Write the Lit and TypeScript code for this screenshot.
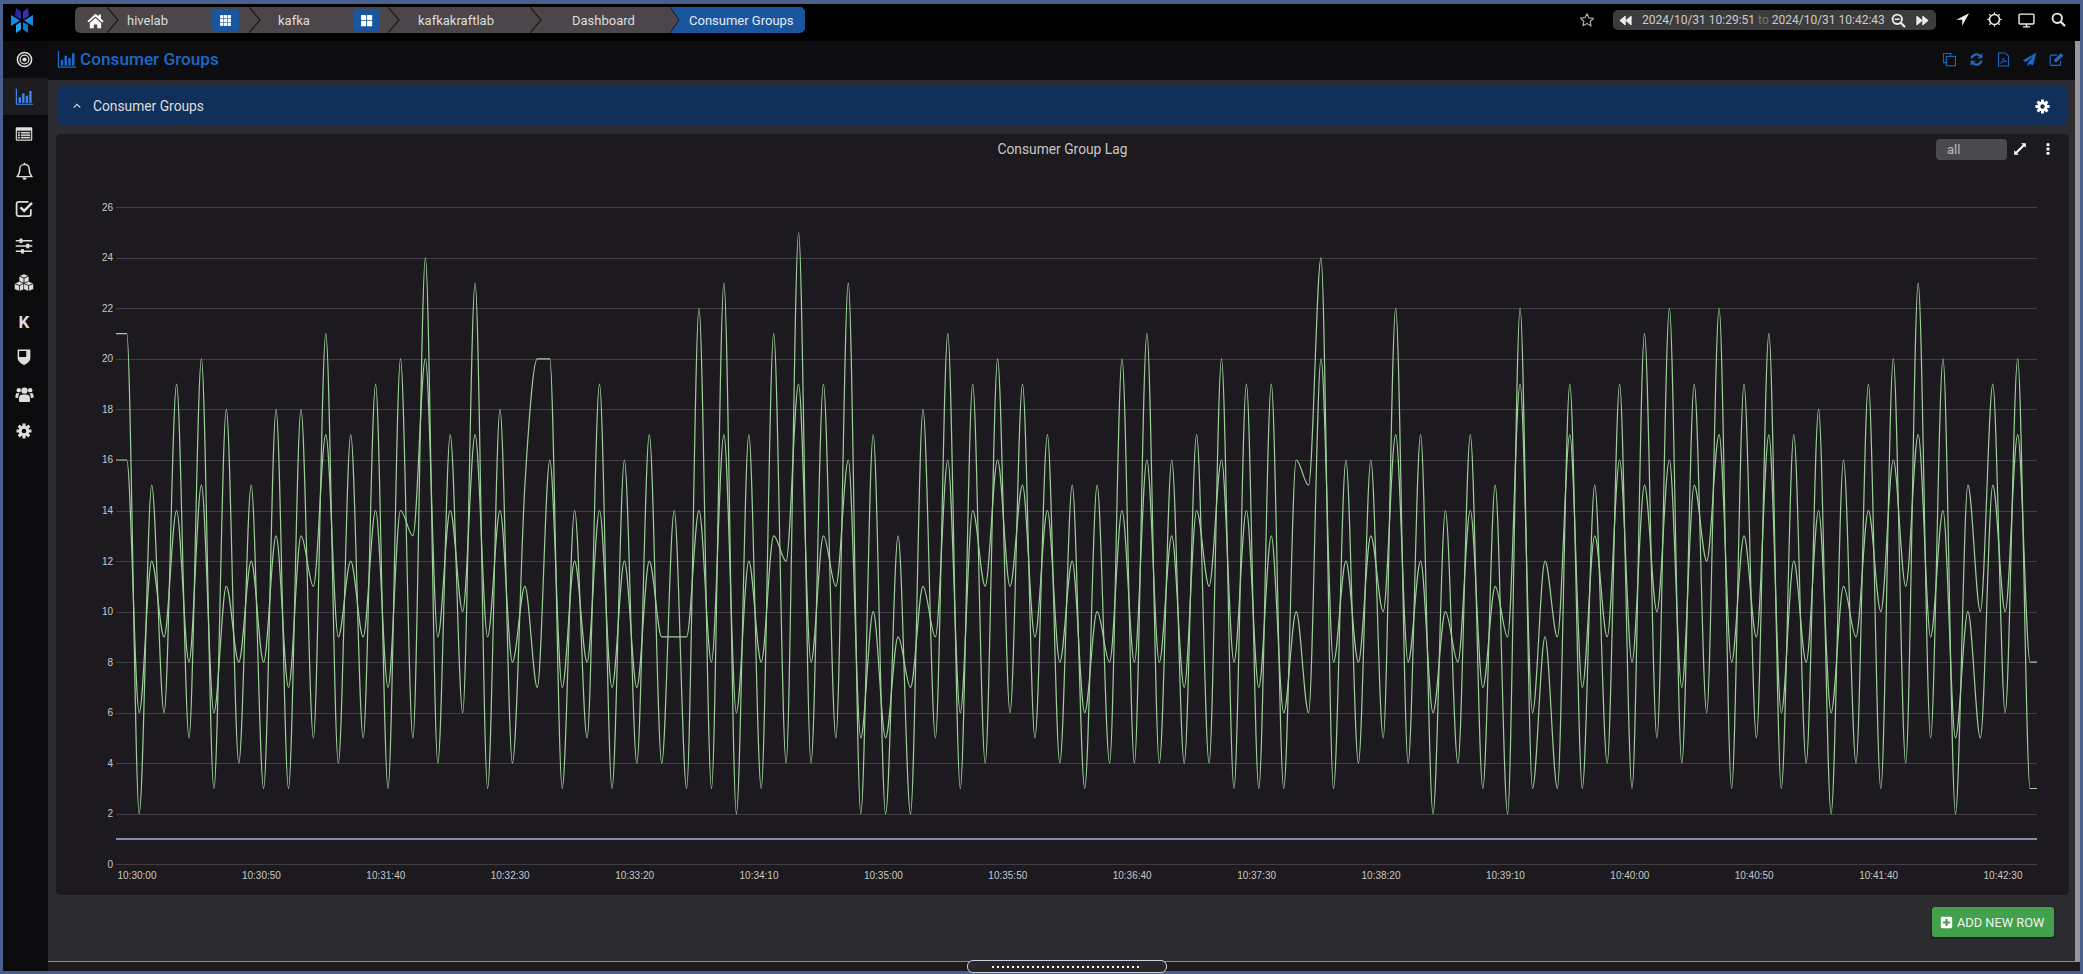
import { LitElement, html, css, svg } from "lit";
import { customElement } from "lit/decorators.js";

const A = [21,2,15,6,19,5,20,3,18,4,15,3,18,3,18,5,21,4,17,5,19,3,20,5,24,4,17,6,23,3,18,4,15,20,20,3,14,5,
19,3,16,4,17,4,14,3,22,3,23,2,17,3,21,4,25,4,19,5,23,2,17,2,13,2,18,5,21,3,19,4,20,6,19,5,17,4,15,3,15,4,20,4,21,4,16,4,17,4,20,3,19,3,19,3,16,15,24,
3,16,4,16,5,22,4,17,2,14,4,17,3,15,2,22,3,9,3,19,3,15,4,19,3,21,5,22,4,19,6,22,3,19,5,21,3,17,4,18,2,16,4,19,3,20,4,23,5,20,2,15,10,19,6,20,3];
const B = [16,6,12,9,14,8,15,6,11,8,12,8,13,7,13,11,17,9,12,9,14,7,14,13,20,9,14,10,17,9,14,8,11,7,16,7,12,8,
14,7,12,7,12,9,9,9,14,8,17,6,12,8,13,12,19,8,13,11,16,5,10,5,9,7,11,9,16,6,14,11,16,11,15,9,14,8,12,6,10,8,14,8,16,8,13,7,14,11,16,8,14,7,13,6,10,6,20,
8,12,8,13,10,17,8,12,6,10,8,14,7,11,9,19,6,12,9,17,7,13,9,16,8,15,10,16,7,15,12,17,8,13,9,17,6,12,8,14,6,11,9,14,10,16,11,17,9,14,5,10,5,15,10,17,8];

const PLOT_L = 116, PLOT_R = 2037, PX = 56, PY = 165;
const xk = (k: number) => 126.8 + 12.44 * k - PX;
const yv = (v: number) => 864.3 - 25.27 * v - PY;

function monotone(values: number[]): string {
  const pts: [number, number][] = [[PLOT_L - PX, yv(values[0])]];
  values.forEach((v, k) => pts.push([xk(k), yv(v)]));
  pts.push([PLOT_R - PX, yv(values[values.length - 1])]);
  const n = pts.length;
  const t: number[] = new Array(n).fill(0);
  for (let i = 1; i < n - 1; i++) {
    const h0 = pts[i][0] - pts[i - 1][0], h1 = pts[i + 1][0] - pts[i][0];
    const s0 = (pts[i][1] - pts[i - 1][1]) / h0, s1 = (pts[i + 1][1] - pts[i][1]) / h1;
    const p = (s0 * h1 + s1 * h0) / (h0 + h1);
    t[i] = (Math.sign(s0) + Math.sign(s1)) * Math.min(Math.abs(s0), Math.abs(s1), 0.5 * Math.abs(p));
  }
  let d = `M${pts[0][0].toFixed(1)} ${pts[0][1].toFixed(1)}`;
  for (let i = 0; i < n - 1; i++) {
    const dx = (pts[i + 1][0] - pts[i][0]) / 3;
    d += `C${(pts[i][0] + dx).toFixed(1)} ${(pts[i][1] + dx * t[i]).toFixed(1)} ${(pts[i + 1][0] - dx).toFixed(1)} ${(pts[i + 1][1] - dx * t[i + 1]).toFixed(1)} ${pts[i + 1][0].toFixed(1)} ${pts[i + 1][1].toFixed(1)}`;
  }
  return d;
}

function gear(): string {
  const c = 12, teeth = 8;
  let d = "";
  for (let i = 0; i < teeth; i++) {
    const a = (i / teeth) * Math.PI * 2;
    const w = 0.2;
    const p = [
      [8, a - w * 1.5], [11.5, a - w], [11.5, a + w], [8, a + w * 1.5],
    ];
    for (const [r, an] of p) {
      d += `${d ? "L" : "M"}${(c + r * Math.cos(an)).toFixed(2)} ${(c + r * Math.sin(an)).toFixed(2)}`;
    }
  }
  return d + "Z M12 8.5a3.5 3.5 0 1 0 0 7a3.5 3.5 0 1 0 0-7Z";
}
const GEAR = gear();

const icons: Record<string, unknown> = {
  home: svg`<path fill="currentColor" d="M12 2.5 0.5 13l1.8 1.9L12 6.2l9.7 8.7 1.8-1.9-4-3.7V3.500h-3v3L12 2.500Z"/><path fill="currentColor" d="M4 15.500 12 8.500l8 7V23h-5.500v-5.500h-5V23H4Z"/>`,
  th: svg`<g fill="currentColor">${[2, 9, 16].flatMap((x) => [2, 9, 16].map((y) => svg`<rect x=${x} y=${y} width="6" height="6"/>`))}</g>`,
  thl: svg`<g fill="currentColor"><rect x="2" y="2" width="9.500" height="9.500" rx="1"/><rect x="13" y="2" width="9.500" height="9.500" rx="1"/><rect x="2" y="13" width="9.500" height="9.500" rx="1"/><rect x="13" y="13" width="9.500" height="9.500" rx="1"/></g>`,
  star: svg`<path fill="none" stroke="currentColor" stroke-width="1.800" stroke-linejoin="round" d="M12 2.500l2.900 6.300 6.900.8-5.100 4.700 1.400 6.800L12 17.200l-6.100 3.400 1.400-6.800-5.100-4.700 6.900-.8Z"/>`,
  back: svg`<path fill="currentColor" stroke="currentColor" stroke-width="1.500" stroke-linejoin="round" d="M11.500 5v14L3 12Zm9.500 0v14l-8.500-7Z"/>`,
  fwd: svg`<path fill="currentColor" stroke="currentColor" stroke-width="1.500" stroke-linejoin="round" d="M3 5v14l8.500-7Zm9.500 0v14l8.500-7Z"/>`,
  zoomout: svg`<circle cx="10" cy="10" r="7.500" fill="none" stroke="currentColor" stroke-width="3"/><path stroke="currentColor" stroke-width="3.500" stroke-linecap="round" d="M16 16l5.500 5.500"/><path stroke="currentColor" stroke-width="2.500" d="M6 10h8"/>`,
  search: svg`<circle cx="10" cy="10" r="7.500" fill="none" stroke="currentColor" stroke-width="3"/><path stroke="currentColor" stroke-width="3.500" stroke-linecap="round" d="M16 16l5.500 5.500"/>`,
  arrow: svg`<path fill="currentColor" d="M22.500 2 2 12.500h9.500V22Z"/>`,
  sun: svg`<circle cx="12" cy="12" r="8" fill="none" stroke="currentColor" stroke-width="2.500"/><g stroke="currentColor" stroke-width="2.500" stroke-linecap="round"><path d="M12 1.500v.5M12 22v.5M1.500 12h.5M22 12h.5M4.500 4.500l.3.3M19.500 4.500l-.3.3M4.500 19.500l.3-.3M19.500 19.500l-.3-.3"/></g>`,
  desktop: svg`<rect x="1.500" y="3" width="21" height="14" rx="1.500" fill="none" stroke="currentColor" stroke-width="2"/><path stroke="currentColor" stroke-width="2" d="M12 17v3.500M7 21h10"/>`,
  bars: svg`<path fill="currentColor" d="M1 2h1.500v19H23v1.500H1Z"/><rect x="4.500" y="13" width="3" height="7" fill="currentColor"/><rect x="9" y="8" width="3" height="12" fill="currentColor"/><rect x="13.500" y="11" width="3" height="9" fill="currentColor"/><rect x="18" y="5" width="3" height="15" fill="currentColor"/>`,
  bullseye: svg`<g fill="none" stroke="currentColor"><circle cx="12" cy="12" r="10" stroke-width="2.200"/><circle cx="12" cy="12" r="6.200" stroke-width="1.800"/></g><circle cx="12" cy="12" r="3" fill="currentColor"/>`,
  list: svg`<rect x="1" y="3" width="22" height="18" rx="1.500" fill="currentColor"/><rect x="2.500" y="7.500" width="19" height="12" fill="#0b0a0d" opacity=".85"/><g fill="currentColor"><rect x="4" y="9.500" width="2.500" height="1.800"/><rect x="8" y="9.500" width="12" height="1.800"/><rect x="4" y="12.700" width="2.500" height="1.800"/><rect x="8" y="12.700" width="12" height="1.800"/><rect x="4" y="15.900" width="2.500" height="1.800"/><rect x="8" y="15.900" width="12" height="1.800"/></g>`,
  bell: svg`<path fill="none" stroke="currentColor" stroke-width="1.800" stroke-linejoin="round" d="M12 3c-3.800 0-6 2.800-6 6.500 0 5-1.500 7-3.500 9h19c-2-2-3.500-4-3.500-9C18 5.800 15.800 3 12 3Z"/><path fill="currentColor" d="M9.500 19.500h5c0 1.800-1.100 3-2.500 3s-2.500-1.200-2.500-3ZM11 1h2v2.500h-2Z"/>`,
  check: svg`<path fill="none" stroke="currentColor" stroke-width="2.200" d="M20 13v6a2.500 2.500 0 0 1-2.500 2.500h-13A2.500 2.500 0 0 1 2 19V6a2.500 2.500 0 0 1 2.500-2.500H17"/><path fill="none" stroke="currentColor" stroke-width="3.200" d="M7 10.500l4.500 4.500L21.500 5"/>`,
  sliders: svg`<g stroke="currentColor" stroke-width="1.800"><path d="M1 5h22M1 12h22M1 19h22"/></g><g fill="currentColor"><rect x="6" y="2" width="4" height="6" rx=".8"/><rect x="15" y="9" width="4" height="6" rx=".8"/><rect x="8" y="16" width="4" height="6" rx=".8"/></g>`,
  cubes: svg`<g fill="currentColor" stroke="#0b0a0d" stroke-width=".8"><path d="M12 1l6 2.500v7l-6 2.500-6-2.500v-7Z"/><path d="M6.500 10l6 2.500v7l-6 2.500-6-2.500v-7Z"/><path d="M17.500 10l6 2.500v7l-6 2.500-6-2.500v-7Z"/></g><g fill="none" stroke="#0b0a0d" stroke-width="1"><path d="M6 3.500l6 2.500 6-2.500M12 6v7M.5 12.500l6 2.500 5-2.500M6.500 15v7M11.500 12.500l6 2.500 6-2.500M17.500 15v7"/></g>`,
  shield: svg`<path fill="currentColor" d="M3.500 2h17v11c0 5-4.500 8-8.500 9.500-4-1.500-8.500-4.500-8.500-9.500Z"/><path fill="#0b0a0d" d="M5.500 4H15v8H5.500Z"/>`,
  users: svg`<g fill="currentColor"><circle cx="12" cy="7" r="4"/><circle cx="4.800" cy="6.500" r="2.800"/><circle cx="19.200" cy="6.500" r="2.800"/><path d="M6.500 13c1.500-1.500 9.500-1.500 11 0 1.200 1 1.500 3.500 1.500 6.500 0 1.500-1 2-2 2H7c-1 0-2-.5-2-2 0-3 .3-5.500 1.500-6.500Z"/><path d="M.5 16c0-3 .5-5.500 2-6 1 .5 2 .8 3.500 0-1 1-1.800 2.800-2 6.500Zm23 0c0-3-.5-5.500-2-6-1 .5-2 .8-3.500 0 1 1 1.800 2.800 2 6.500Z"/></g>`,
  cog: svg`<path fill="currentColor" fill-rule="evenodd" d=${GEAR}/>`,
  copy: svg`<g fill="none" stroke="currentColor" stroke-width="1.700"><path d="M14 6V2.500H2.500V17H7"/><rect x="7" y="7" width="14.500" height="15"/></g>`,
  refresh: svg`<g fill="none" stroke="currentColor" stroke-width="3.400"><path d="M4 10.500a8.500 8.500 0 0 1 14-4.500"/><path d="M20 13.500a8.500 8.500 0 0 1-14 4.500"/></g><path fill="currentColor" d="M21.500 1.500v8.500H13ZM2.500 22.500V14H11Z"/>`,
  pdf: svg`<path fill="none" stroke="currentColor" stroke-width="1.700" d="M4 1.500h11l5 5v16H4Z"/><path fill="none" stroke="currentColor" stroke-width="1.300" d="M7 18c3-1.500 4.500-5 4.500-8.500 0 3 2 5 5.500 5.500-3.500 0-7 1-10 3Z"/>`,
  plane: svg`<path fill="currentColor" d="M23 1 1 13.500l5.500 2.500L19 5.500 9 17.500V23l3.500-4 5 2.500Z"/>`,
  edit: svg`<path fill="none" stroke="currentColor" stroke-width="1.900" d="M18.500 14v5.500a2 2 0 0 1-2 2H4a2 2 0 0 1-2-2V7a2 2 0 0 1 2-2h9"/><path fill="currentColor" d="M8.500 12 19 1.500 23 5.500 12.500 16H8.500Z"/>`,
  up: svg`<path fill="none" stroke="currentColor" stroke-width="2.600" d="M4 16l8-8 8 8"/>`,
  expand: svg`<path fill="currentColor" d="M14 2h8v8l-2.800-2.800L7.200 19.200 10 22H2v-8l2.800 2.800L16.800 4.800Z"/>`,
  dots: svg`<g fill="currentColor"><rect x="9.500" y="2" width="5" height="5" rx="1"/><rect x="9.500" y="9.500" width="5" height="5" rx="1"/><rect x="9.500" y="17" width="5" height="5" rx="1"/></g>`,
  plus: svg`<path fill="currentColor" fill-rule="evenodd" d="M4 1.500h16A2.500 2.500 0 0 1 22.500 4v16a2.500 2.500 0 0 1-2.500 2.500H4A2.500 2.500 0 0 1 1.500 20V4A2.500 2.500 0 0 1 4 1.500ZM10 5.500v4.500H5.500v4H10v4.500h4V14h4.500v-4H14V5.500Z"/>`,
};

const ic = (name: string, cls = "") => html`<svg class="i n-${name} ${cls}" viewBox="0 0 24 24" aria-hidden="true">${icons[name]}</svg>`;

const Y_TICKS = Array.from({ length: 14 }, (_, i) => i * 2);
const X_LABELS = ["10:30:00","10:30:50","10:31:40","10:32:30","10:33:20","10:34:10","10:35:00","10:35:50","10:36:40","10:37:30","10:38:20","10:39:10","10:40:00","10:40:50","10:41:40","10:42:30"];
const SIDE = ["bullseye","bars","list","bell","check","sliders","cubes","K","shield","users","cog"];

@customElement("app-root")
export class AppRoot extends LitElement {
  static styles = css`
    :host { display: block; box-sizing: border-box; width: 2083px; height: 974px; padding: 4px 3px 3px; background: #4a5f8c; overflow: hidden; font-family: Roboto, "Liberation Sans", sans-serif; color: #ddd; }
    * { box-sizing: border-box; }
    .i { display: block; flex: none; width: 16px; height: 16px; }
    .frame { display: flex; flex-direction: column; height: 967px; background: #0b0a0d; }
    .top { height: 37px; flex: none; display: flex; align-items: center; padding: 0 0 5px 7px; background: #000; }
    .logo { width: 24px; height: 25px; flex: none; }
    .crumbs { display: flex; height: 26px; margin-left: 41px; font-size: 13px; color: #ddd; }
    .seg { display: flex; align-items: center; background: #4a4649; white-space: nowrap; }
    .seg.home { width: 32px; padding-left: 12px; border-radius: 5px 0 0 5px; color: #fff; }
    .seg.home .i { width: 17px; height: 17px; }
    .seg.hive { width: 130px; padding: 0 10px 0 8px; justify-content: space-between; }
    .seg.kafka { width: 127px; padding: 0 8px 0 17px; justify-content: space-between; }
    .seg.lab { width: 130px; padding-left: 18px; }
    .seg.dash { width: 128px; padding-left: 30px; }
    .seg.cur { width: 123px; padding-left: 7px; background: #1a56a0; border-radius: 0 5px 5px 0; color: #e4ecf6; }
    .chev { display: block; flex: none; width: 12px; height: 26px; background: #4a4649; }
    .sq { width: 27px; height: 22px; display: flex; align-items: center; justify-content: center; background: #1a56a0; border-radius: 2px; color: #fff; }
    .sq .i { width: 13px; height: 13px; }
    .right { margin-left: auto; display: flex; align-items: center; padding-right: 6px; color: #eee; }
    .starbtn { width: 16px; height: 16px; margin-right: 18px; color: #aaa; }
    .range { width: 323px; height: 20px; display: flex; align-items: center; padding: 0 4px 0 5px; background: #3c3c3e; border-radius: 5px; font-size: 12px; color: #ccc; white-space: nowrap; }
    .range .i { width: 15px; height: 15px; color: #eee; }
    .stamp { margin-left: 9px; width: 241px; flex: none; }
    .stamp em { font-style: normal; color: #777; }
    .range .zoom { margin-left: 8px; }
    .range .ff { margin-left: 9px; }
    .tools { display: flex; margin-left: 11px; }
    .tools span { width: 31.75px; display: flex; justify-content: center; }
    .tools .i { width: 15px; height: 15px; }
    .tools .n-arrow { width: 15px; height: 15px; }
    .tools .n-desktop { width: 17px; height: 17px; }
    .body { flex: 1; min-height: 0; display: flex; }
    .side { width: 45px; flex: none; display: flex; flex-direction: column; background: #0b0a0d; }
    .sitem { height: 37.2px; flex: none; display: flex; align-items: center; justify-content: center; padding-right: 3px; color: #ddd; }
    .sitem .i { width: 18px; height: 18px; }
    .sitem .n-bullseye { width: 17px; height: 17px; }
    .sitem .n-bars { width: 19px; height: 19px; }
    .sitem .n-bell { width: 19px; height: 19px; }
    .sitem .n-check { width: 19px; height: 19px; }
    .sitem .n-cubes { width: 20px; height: 20px; }
    .sitem .n-users { width: 19px; height: 19px; }
    .sitem .n-cog { width: 16px; height: 16px; }
    .sitem.active { background: #1c1b1f; color: #3f88ee; }
    .sitem.k { font-size: 17px; font-weight: 700; padding-top: 4px; }
    .main { position: relative; flex: 1; min-width: 0; display: flex; flex-direction: column; background: #2c2b2f; }
    .scrollwrap { flex: 1; min-height: 0; display: flex; }
    .content { flex: 1; min-width: 0; display: flex; flex-direction: column; }
    .sbar { width: 5px; flex: none; background: #98989c; }
    .titlebar { height: 39px; flex: none; display: flex; align-items: center; padding: 0 5px 3px 9px; background: #0d0c0f; color: #1b6ac9; }
    .titlebar .i.big { width: 20px; height: 20px; }
    .titlebar h1 { margin: 2px 0 0 3px; font-size: 17.200px; font-weight: 500; line-height: 1; white-space: nowrap; }
    .acts { margin-left: auto; display: flex; }
    .acts span { width: 26.75px; display: flex; justify-content: center; }
    .acts .i { width: 15px; height: 15px; }
    .row { height: 40px; flex: none; display: flex; align-items: center; margin: 6px 8px 0 9px; padding: 0 17.500px 0 15px; background: #10305a; border-radius: 4px; font-size: 13.800px; color: #ddd; }
    .row .i.up { width: 10px; height: 10px; margin-right: 11px; }
    .row .i.gear { margin-left: auto; width: 15px; height: 15px; color: #fff; }
    .panel { height: 761px; flex: none; margin: 8px 6px 0 8px; background: #1c1a1e; border-radius: 5px; display: flex; flex-direction: column; }
    .phead { height: 31px; flex: none; display: grid; grid-template-columns: 1fr auto 1fr; padding-top: 5px; }
    .ptitle { font-size: 13.800px; line-height: 21px; color: #c8c8c8; }
    .popts { display: flex; justify-content: flex-end; align-items: flex-start; padding-right: 14.500px; color: #fff; }
    .sel { width: 71px; height: 21px; padding-left: 11px; font-size: 13px; line-height: 21px; background: #4a4a4c; border-radius: 4px; color: #bbb; }
    .popts .i { width: 14px; height: 14px; margin-top: 3px; }
    .popts .expand { margin-left: 6px; }
    .popts .menu { margin-left: 13.500px; }
    .chart { display: block; width: 2013px; height: 730px; }
    .chart text { font-family: "Liberation Sans", sans-serif; font-size: 10px; fill: #c8c8c8; }
    .foot { display: flex; justify-content: flex-end; padding: 12px 21px 0 0; }
    .add { width: 122px; height: 30px; display: flex; align-items: center; padding-left: 8px; gap: 4px; background: #43a04c; border-radius: 3px; font-size: 12.800px; color: #eef6ee; white-space: nowrap; box-shadow: 0 1px 3px rgba(0,0,0,.4); }
    .add .i { width: 13px; height: 13px; color: #fff; }
    .strip { height: 10px; flex: none; background: #1c1a1e; border-top: 1px solid #8a8a8a; }
    .handle { position: absolute; left: 919px; bottom: -2px; width: 200px; height: 13px; display: flex; align-items: center; justify-content: center; background: #28272b; border: 1px solid #cfd3de; border-radius: 6px; }
    .dots { width: 150px; height: 2px; background: repeating-linear-gradient(90deg, #fff 0 2px, transparent 2px 5px); }
  `;

  render() {
    return html`
      <div class="frame">
        <header class="top">
          <svg class="logo" viewBox="0 0 24 25" aria-hidden="true">
            <path fill="#2a2a9e" d="M6 0l5 3.500v8L5 8Z"/><path fill="#3b2fb0" d="M18 0l-5 3.500v8l6-3.500Z"/>
            <path fill="#1a8be0" d="M1 7l9 5.500L1 18Z"/><path fill="#1a8be0" d="M23 7l-9 5.500 9 5.500Z"/>
            <path fill="#1fa4ef" d="M11 14v7.500L6 25v-8Z"/><path fill="#0f7bd0" d="M13 14l5 3v8l-5-3.500Z"/>
          </svg>
          <nav class="crumbs">
            <div class="seg home">${ic("home")}</div>
            ${this.chev()}
            <div class="seg hive"><span>hivelab</span><span class="sq">${ic("th")}</span></div>
            ${this.chev()}
            <div class="seg kafka"><span>kafka</span><span class="sq">${ic("thl")}</span></div>
            ${this.chev()}
            <div class="seg lab">kafkakraftlab</div>
            ${this.chev()}
            <div class="seg dash">Dashboard</div>
            <svg class="chev" viewBox="0 0 12 26" aria-hidden="true"><path d="M0 0H12V26H0L9 13Z" fill="#1a56a0"/><path d="M0 0L9 13 0 26" fill="none" stroke="#1c1a1c"/></svg>
            <div class="seg cur">Consumer Groups</div>
          </nav>
          <div class="right">
            <div class="starbtn">${ic("star")}</div>
            <div class="range">
              ${ic("back")}
              <span class="stamp">2024/10/31 10:29:51 <em>to</em> 2024/10/31 10:42:43</span>
              ${ic("zoomout", "zoom")}
              ${ic("fwd", "ff")}
            </div>
            <div class="tools">
              <span>${ic("arrow")}</span><span>${ic("sun")}</span><span>${ic("desktop")}</span><span>${ic("search")}</span>
            </div>
          </div>
        </header>
        <div class="body">
          <aside class="side">
            ${SIDE.map((s) => s === "K"
              ? html`<div class="sitem k">K</div>`
              : html`<div class="sitem ${s === "bars" ? "active" : ""}">${ic(s)}</div>`)}
          </aside>
          <main class="main">
            <div class="scrollwrap">
              <div class="content">
                <div class="titlebar">
                  ${ic("bars", "big")}
                  <h1>Consumer Groups</h1>
                  <div class="acts">
                    <span>${ic("copy")}</span><span>${ic("refresh")}</span><span>${ic("pdf")}</span><span>${ic("plane")}</span><span>${ic("edit")}</span>
                  </div>
                </div>
                <div class="row">${ic("up", "up")}<span>Consumer Groups</span>${ic("cog", "gear")}</div>
                <section class="panel">
                  <div class="phead">
                    <div></div>
                    <div class="ptitle">Consumer Group Lag</div>
                    <div class="popts"><div class="sel">all</div>${ic("expand", "expand")}${ic("dots", "menu")}</div>
                  </div>
                  ${this.chart()}
                </section>
                <div class="foot"><div class="add">${ic("plus")}<span>ADD NEW ROW</span></div></div>
              </div>
              <div class="sbar"></div>
            </div>
            <div class="strip"></div>
            <div class="handle"><div class="dots"></div></div>
          </main>
        </div>
      </div>
    `;
  }

  chev() {
    return html`<svg class="chev" viewBox="0 0 12 26" aria-hidden="true"><path d="M0 0L11 13 0 26" fill="none" stroke="#1c1a1c" stroke-width="1.200"/></svg>`;
  }

  chart() {
    const l = PLOT_L - PX, r = PLOT_R - PX;
    return html`<svg class="chart" viewBox="0 0 2013 730" role="img">
      ${Y_TICKS.map((v) => svg`<line x1=${l} x2=${r} y1=${Math.round(yv(v)) + 0.5} y2=${Math.round(yv(v)) + 0.5} stroke="#403e42"/>`)}
      ${Y_TICKS.map((v) => svg`<text x=${57} y=${yv(v) + 3.5} text-anchor="end">${v}</text>`)}
      ${X_LABELS.map((t, i) => svg`<text x=${137 + 124.4 * i - PX} y=${875 + 3.5 - PY} text-anchor="middle">${t}</text>`)}
      <line x1=${l} x2=${r} y1=${yv(1)} y2=${yv(1)} stroke="#aab4d8" stroke-width="1.500"/>
      <path d=${monotone(A)} fill="none" stroke="#9ccf98" stroke-width="1.200"/>
      <path d=${monotone(B)} fill="none" stroke="#9ccf98" stroke-width="1.200"/>
    </svg>`;
  }
}
